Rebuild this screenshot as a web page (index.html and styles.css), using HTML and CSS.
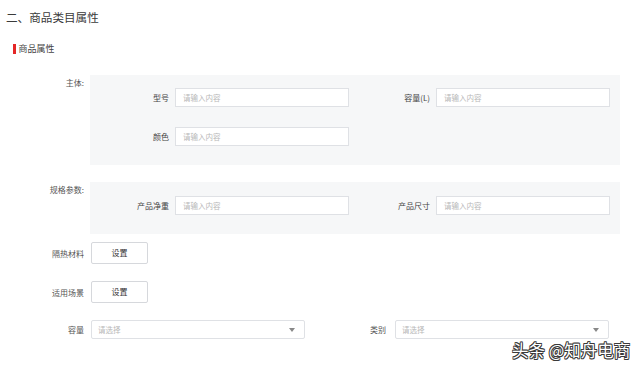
FILE: index.html
```
<!DOCTYPE html>
<html lang="zh-CN">
<head>
    <meta charset="UTF-8">
    <title>商品类目属性</title>
    <link rel="stylesheet" href="styles.css">
</head>
<body>
<div id="container">
    <div class="title">二、商品类目属性</div>
    <div class="subtitle"><span class="redbar"></span>商品属性</div>

    <div class="row toprow">
        <div class="rowlabel">主体:</div>
        <div class="panel panelbig">
            <div class="field">
                <div class="fieldlabel">型号</div>
                <div class="input">请输入内容</div>
            </div>
            <div class="field">
                <div class="fieldlabel">容量(L)</div>
                <div class="input">请输入内容</div>
            </div>
            <div class="field">
                <div class="fieldlabel">颜色</div>
                <div class="input">请输入内容</div>
            </div>
        </div>
    </div>

    <div class="row toprow spec">
        <div class="rowlabel">规格参数:</div>
        <div class="panel panelsmall">
            <div class="field">
                <div class="fieldlabel">产品净重</div>
                <div class="input">请输入内容</div>
            </div>
            <div class="field">
                <div class="fieldlabel">产品尺寸</div>
                <div class="input">请输入内容</div>
            </div>
        </div>
    </div>

    <div class="row btnrow first">
        <div class="rowlabel">隔热材料</div>
        <div class="setbutton">设置</div>
    </div>
    <div class="row btnrow">
        <div class="rowlabel">适用场景</div>
        <div class="setbutton">设置</div>
    </div>

    <div class="row selrow">
        <div class="rowlabel">容量</div>
        <div class="select">请选择<span class="caret"></span></div>
        <div class="sellabel">类别</div>
        <div class="select">请选择<span class="caret"></span></div>
    </div>
</div>
<div class="watermark">头条 @知舟电商</div>
</body>
</html>
```
FILE: styles.css
```
body {
    margin: 0;
    background-color: #ffffff;
    font-family: "Noto Sans CJK SC", "Noto Sans", sans-serif;
    color: #555555;
}

#container {
    width: 640px;
    height: 369px;
    overflow: hidden;
}

.title {
    margin-left: 6px;
    margin-top: 9px;
    height: 17px;
    line-height: 17px;
    font-size: 11.6px;
    color: #3a3a3a;
}

.subtitle {
    display: flex;
    align-items: center;
    margin-left: 13px;
    margin-top: 17px;
    height: 11px;
    line-height: 11px;
    font-size: 9px;
    color: #444444;
}

.redbar {
    width: 2.5px;
    height: 10px;
    margin-right: 3px;
    background-color: #e42626;
}

.row {
    display: flex;
}

.toprow {
    margin-top: 21px;
}

.spec {
    margin-top: 17px;
}

.rowlabel {
    width: 84px;
    margin-right: 6px;
    text-align: right;
    font-size: 8px;
    color: #555555;
}

.toprow .rowlabel {
    padding-top: 3px;
    line-height: 10px;
}

.panel {
    width: 520px;
    padding-right: 10px;
    background-color: #f6f7f8;
    display: grid;
    grid-template-columns: 259px 261px;
    row-gap: 20px;
    align-content: start;
}

.panelbig {
    height: 77px;
    padding-top: 13px;
}

.panelsmall {
    height: 38px;
    padding-top: 14px;
}

.field {
    display: flex;
    align-items: center;
}

.fieldlabel {
    text-align: right;
    font-size: 8px;
    color: #444444;
    padding-right: 6px;
}

.field:nth-child(odd) .fieldlabel {
    width: 79px;
}

.field:nth-child(even) .fieldlabel {
    width: 81px;
}

.input {
    box-sizing: border-box;
    width: 174px;
    height: 19px;
    line-height: 17px;
    border: 1px solid #dfe1e5;
    background-color: #ffffff;
    padding-left: 7px;
    font-size: 7.5px;
    color: #b8b8b8;
}

.btnrow {
    align-items: center;
    margin-top: 17px;
}

.btnrow.first {
    margin-top: 8px;
}

.btnrow .rowlabel {
    margin-right: 7px;
}

.setbutton {
    box-sizing: border-box;
    width: 57px;
    height: 22px;
    line-height: 20px;
    border: 1px solid #d6d8dc;
    border-radius: 2px;
    background-color: #ffffff;
    text-align: center;
    font-size: 8px;
    color: #333333;
}

.selrow {
    align-items: center;
    margin-top: 17px;
}

.selrow .rowlabel {
    margin-right: 7px;
}

.select {
    position: relative;
    box-sizing: border-box;
    width: 214px;
    height: 19px;
    line-height: 17px;
    border: 1px solid #dfe1e5;
    border-radius: 2px;
    background-color: #ffffff;
    padding-left: 6px;
    font-size: 7.5px;
    color: #b8b8b8;
}

.sellabel {
    width: 81px;
    margin-right: 9px;
    text-align: right;
    font-size: 8px;
    color: #555555;
}

.caret {
    position: absolute;
    right: 9px;
    top: 7px;
    width: 0;
    height: 0;
    border-left: 3.5px solid transparent;
    border-right: 3.5px solid transparent;
    border-top: 4px solid #888888;
}

.watermark {
    position: absolute;
    left: 512px;
    top: 339px;
    font-size: 16.5px;
    line-height: 22px;
    color: #ffffff;
    text-shadow: 0.8px 0 0 #3a3a3a, -0.8px 0 0 #3a3a3a, 0 0.8px 0 #3a3a3a, 0 -0.8px 0 #3a3a3a,
        0.8px 0.8px 0 #3a3a3a, -0.8px -0.8px 0 #3a3a3a, 0.8px -0.8px 0 #3a3a3a, -0.8px 0.8px 0 #3a3a3a;
}
```
